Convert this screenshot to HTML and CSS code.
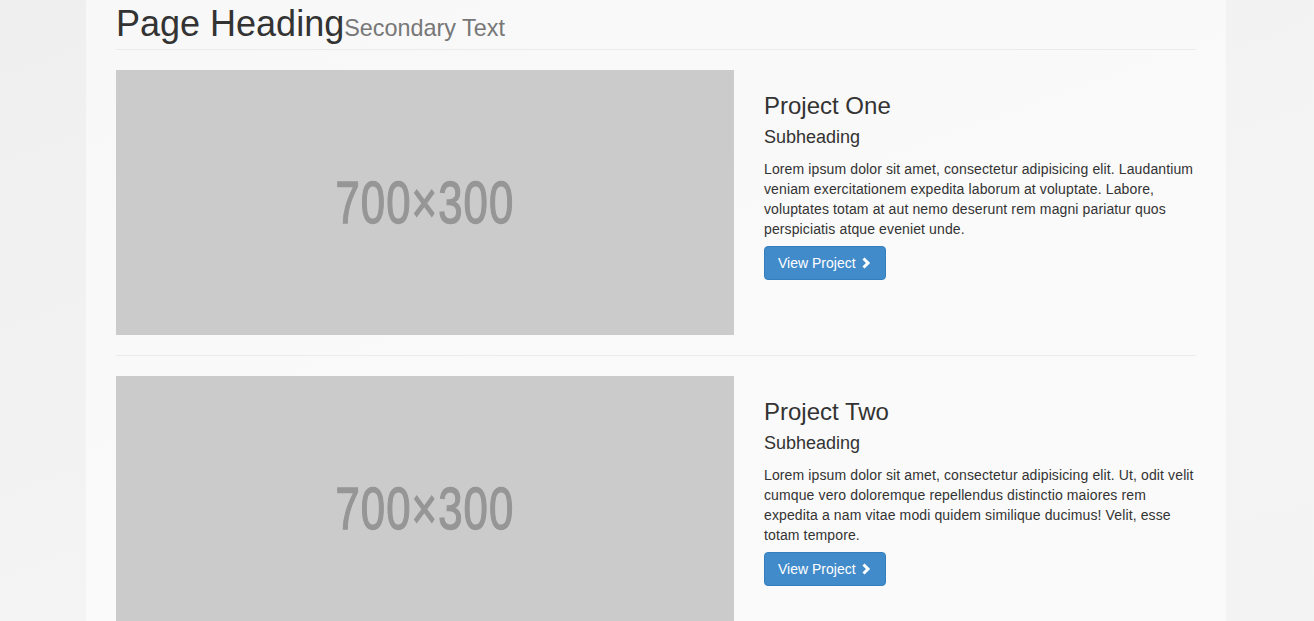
FILE: index.html
```html
<!DOCTYPE html>
<html lang="en">
<head>
<meta charset="utf-8">
<title>Portfolio</title>
<link rel="stylesheet" href="styles.css">
</head>
<body>
<div class="container">
  <div class="page-header">
    <h1>Page Heading<small>Secondary Text</small></h1>
  </div>

  <div class="project">
    <div class="project-media">
      <div class="placeholder"><span>700×300</span></div>
    </div>
    <div class="project-info">
      <h3>Project One</h3>
      <h4>Subheading</h4>
      <p>Lorem ipsum dolor sit amet, consectetur adipisicing elit. Laudantium veniam exercitationem expedita laborum at voluptate. Labore, voluptates totam at aut nemo deserunt rem magni pariatur quos perspiciatis atque eveniet unde.</p>
      <a class="btn" href="#">View Project <svg class="chev" width="9" height="12" viewBox="0 0 9 12"><polyline points="1.5,1.5 6,6 1.5,10.5" fill="none" stroke="#fff" stroke-width="3"/></svg></a>
    </div>
  </div>

  <hr class="sep">

  <div class="project">
    <div class="project-media">
      <div class="placeholder"><span>700×300</span></div>
    </div>
    <div class="project-info">
      <h3>Project Two</h3>
      <h4>Subheading</h4>
      <p>Lorem ipsum dolor sit amet, consectetur adipisicing elit. Ut, odit velit cumque vero doloremque repellendus distinctio maiores rem expedita a nam vitae modi quidem similique ducimus! Velit, esse totam tempore.</p>
      <a class="btn" href="#">View Project <svg class="chev" width="9" height="12" viewBox="0 0 9 12"><polyline points="1.5,1.5 6,6 1.5,10.5" fill="none" stroke="#fff" stroke-width="3"/></svg></a>
    </div>
  </div>
</div>
</body>
</html>
```

FILE: styles.css
```css
html, body {
  margin: 0;
  padding: 0;
}
body {
  font-family: "Liberation Sans", Arial, sans-serif;
  font-size: 14px;
  line-height: 20px;
  color: #333;
  background: linear-gradient(160deg, #efefef 0%, #f4f4f4 60%, #f3f3f3 100%);
  min-height: 100vh;
  overflow: hidden;
}
.container {
  width: 1080px;
  margin-left: calc(50% - 571px);
  padding: 0 30px;
  min-height: 100vh;
  background: rgba(255, 255, 255, 0.55);
}
.page-header {
  padding: 0 0 5px;
  margin: 0 0 20px;
  border-bottom: 1px solid #ebebeb;
}
.page-header h1 {
  margin: 0;
  padding-top: 4px;
  font-size: 36px;
  line-height: 40px;
  font-weight: 500;
  color: #333;
}
.page-header small {
  font-size: 65%;
  line-height: 1;
  color: #777;
  font-weight: normal;
}
.project {
  display: flex;
  gap: 30px;
}
.project-media {
  flex: 0 0 618px;
}
.placeholder {
  width: 618px;
  height: 265px;
  background: #cbcbcb;
  display: flex;
  align-items: center;
  justify-content: center;
}
.placeholder span {
  display: inline-block;
  font-size: 59px;
  line-height: 60px;
  font-weight: normal;
  letter-spacing: 1.5px;
  color: #969696;
  -webkit-text-stroke: 1.4px #969696;
  transform: scaleX(0.74);
}
.project-info {
  flex: 1;
}
.project-info h3 {
  margin: 23px 0 9px;
  font-size: 24px;
  line-height: 26.4px;
  font-weight: 500;
  color: #333;
}
.project-info h4 {
  margin: 0 0 10.5px;
  font-size: 18px;
  line-height: 19.8px;
  font-weight: 500;
  color: #333;
}
.project-info p {
  margin: 0 0 7.5px;
  letter-spacing: 0.12px;
}
.btn {
  display: inline-flex;
  align-items: center;
  gap: 6px;
  height: 34px;
  box-sizing: border-box;
  padding: 0 14px 0 13px;
  font-size: 14px;
  color: #fff;
  text-decoration: none;
  background: #428bca;
  border: 1px solid #357ebd;
  border-radius: 4px;
}
.chev {
  display: block;
}
.sep {
  margin: 20px 0;
  border: 0;
  border-top: 1px solid #ebebeb;
  height: 0;
}
```
